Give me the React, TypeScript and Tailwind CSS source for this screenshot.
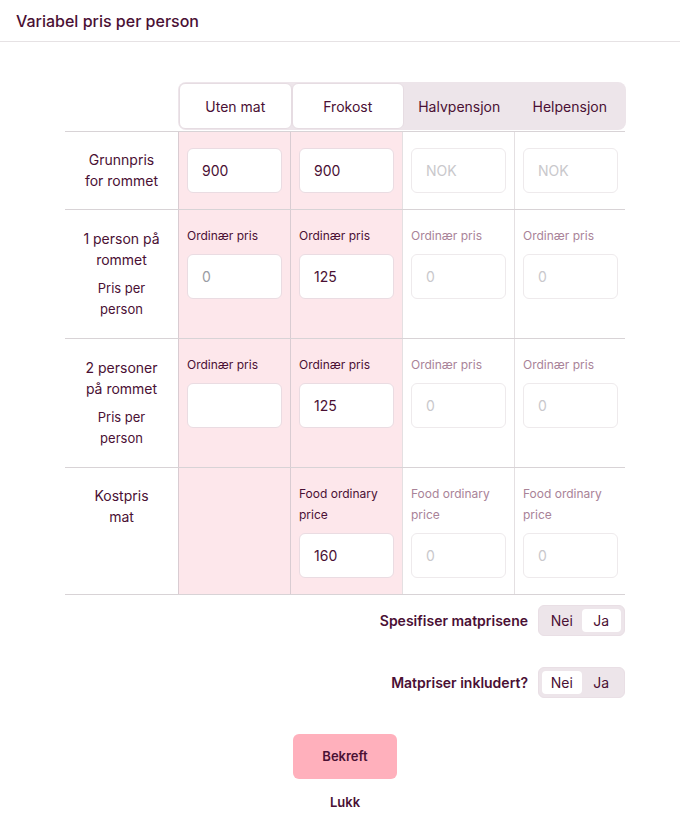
import { useState } from 'react';

const columns = [
  { key: 'uten', label: 'Uten mat', active: true },
  { key: 'frokost', label: 'Frokost', active: true },
  { key: 'halv', label: 'Halvpensjon', active: false },
  { key: 'hel', label: 'Helpensjon', active: false },
];

type Cell = { label?: string; value?: string; placeholder?: string; empty?: boolean };

const rows: { title: string[]; sub?: string[]; cells: Cell[] }[] = [
  {
    title: ['Grunnpris', 'for rommet'],
    cells: [
      { value: '900' },
      { value: '900' },
      { placeholder: 'NOK' },
      { placeholder: 'NOK' },
    ],
  },
  {
    title: ['1 person på', 'rommet'],
    sub: ['Pris per', 'person'],
    cells: [
      { label: 'Ordinær pris', placeholder: '0' },
      { label: 'Ordinær pris', value: '125' },
      { label: 'Ordinær pris', placeholder: '0' },
      { label: 'Ordinær pris', placeholder: '0' },
    ],
  },
  {
    title: ['2 personer', 'på rommet'],
    sub: ['Pris per', 'person'],
    cells: [
      { label: 'Ordinær pris', value: '' },
      { label: 'Ordinær pris', value: '125' },
      { label: 'Ordinær pris', placeholder: '0' },
      { label: 'Ordinær pris', placeholder: '0' },
    ],
  },
  {
    title: ['Kostpris', 'mat'],
    cells: [
      { empty: true },
      { label: 'Food ordinary price', value: '160' },
      { label: 'Food ordinary price', placeholder: '0' },
      { label: 'Food ordinary price', placeholder: '0' },
    ],
  },
];

function Toggle({ label, value }: { label: string; value: 'Nei' | 'Ja' }) {
  const [current, setCurrent] = useState(value);
  return (
    <div className="flex items-center justify-end gap-[10px]">
      <span className="text-[14px] font-semibold text-[#4a1034]">{label}</span>
      <div className="flex h-[31px] w-[87px] rounded-md border border-[#e9dfe5] bg-[#ede5ea] p-[3px]">
        {(['Nei', 'Ja'] as const).map((opt) => (
          <button
            key={opt}
            onClick={() => setCurrent(opt)}
            className={`flex-1 rounded-[4px] text-[14px] text-[#4a1034] ${
              current === opt ? 'bg-white' : 'bg-transparent'
            }`}
          >
            {opt}
          </button>
        ))}
      </div>
    </div>
  );
}

export default function App() {
  return (
    <div className="min-h-screen bg-white font-['Inter',sans-serif] text-[#4a1034]">
      {/* header */}
      <div className="flex h-[42px] items-center border-b border-[#e6e2e4] px-4">
        <h1 className="text-[16px] font-medium">Variabel pris per person</h1>
      </div>

      <div className="ml-[65px] w-[560px] pt-[40px]">
        {/* column tabs */}
        <div className="grid grid-cols-[113px_repeat(4,112px)] border-b border-[#d8d3d6]">
          <div />
          <div className="col-span-4 mb-px flex h-[48px] rounded-lg bg-[#ede5ea] p-px">
            {columns.map((c) => (
              <div
                key={c.key}
                className={`flex flex-1 items-center justify-center rounded-md text-[14px] ${
                  c.active ? 'border border-[#e6dce2] bg-white' : ''
                }`}
              >
                {c.label}
              </div>
            ))}
          </div>
        </div>

        {/* rows */}
        {rows.map((row, ri) => (
          <div
            key={ri}
            className="grid grid-cols-[113px_repeat(4,112px)] border-b border-[#d8d3d6]"
          >
            <div
              className={`flex flex-col items-center px-2 text-center ${
                row.sub ? 'py-[18px]' : 'py-[17px]'
              }`}
            >
              {row.title.map((t) => (
                <span key={t} className="text-[14px] leading-[21px]">
                  {t}
                </span>
              ))}
              {row.sub && (
                <div className="mt-[8px] flex flex-col">
                  {row.sub.map((t) => (
                    <span key={t} className="text-[13px] leading-[21px]">
                      {t}
                    </span>
                  ))}
                </div>
              )}
            </div>
            {row.cells.map((cell, ci) => {
              const active = columns[ci].active;
              return (
                <div
                  key={ci}
                  className={`border-l px-2 ${ri === 0 ? 'pt-4' : 'pt-[15px]'} pb-4 ${
                    active ? 'border-[#d9ccd2] bg-[#fde7eb]' : 'border-[#e4e0e2] bg-white'
                  }`}
                >
                  {!cell.empty && (
                    <>
                      {cell.label && (
                        <div
                          className={`mb-2 text-[12px] leading-[21px] ${
                            active ? 'text-[#4a1034]' : 'text-[#a98398]'
                          }`}
                        >
                          {cell.label}
                        </div>
                      )}
                      <input
                        disabled={!active}
                        defaultValue={cell.value}
                        placeholder={cell.placeholder}
                        className={`h-[45px] w-[95px] rounded-md border bg-white pl-[14px] text-[14px] outline-none ${
                          active
                            ? 'border-[#eadce2] text-[#4a1034] placeholder:text-[#9a9ca3]'
                            : 'border-[#eeeaec] placeholder:text-[#c9c8cc]'
                        }`}
                      />
                    </>
                  )}
                </div>
              );
            })}
          </div>
        ))}

        {/* toggles */}
        <div className="mt-[10px] flex flex-col gap-[31px]">
          <Toggle label="Spesifiser matprisene" value="Ja" />
          <Toggle label="Matpriser inkludert?" value="Nei" />
        </div>

        {/* actions */}
        <div className="mt-[36px] flex flex-col items-center">
          <button className="h-[45px] w-[104px] rounded-md bg-[#ffb0bc] text-[13px] font-semibold text-[#4a1034]">
            Bekreft
          </button>
          <button className="mt-[14px] text-[13px] font-semibold text-[#4a1034]">Lukk</button>
        </div>
      </div>
    </div>
  );
}
